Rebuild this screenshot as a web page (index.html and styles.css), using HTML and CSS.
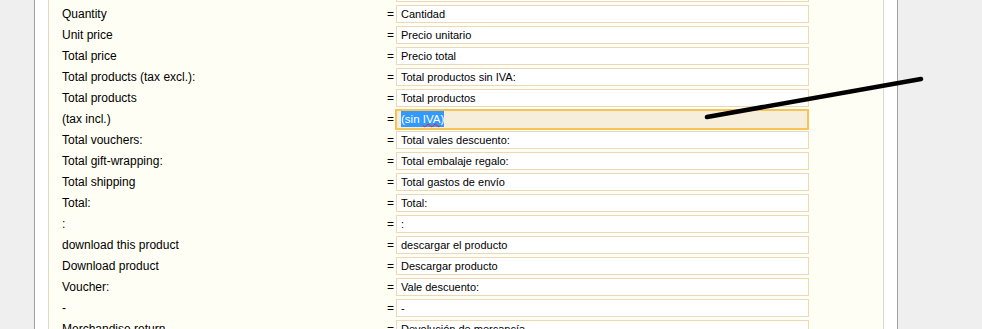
FILE: index.html
```html
<!DOCTYPE html>
<html lang="en">
<head>
  <meta charset="UTF-8" />
  <title>Translations - Fields</title>
  <link rel="stylesheet" href="styles.css">
</head>
<body>
  <div class="page">
    <div class="panel">

      <!-- translation rows -->
      <div class="rows">
        <div class="row"><label></label><span class="eq"></span><input class="field" type="text" value=""></div>
        <div class="row"><label>Quantity</label><span class="eq">=</span><input class="field" type="text" value="Cantidad"></div>
        <div class="row"><label>Unit price</label><span class="eq">=</span><input class="field" type="text" value="Precio unitario"></div>
        <div class="row"><label>Total price</label><span class="eq">=</span><input class="field" type="text" value="Precio total"></div>
        <div class="row"><label>Total products (tax excl.):</label><span class="eq">=</span><input class="field" type="text" value="Total productos sin IVA:"></div>
        <div class="row"><label>Total products</label><span class="eq">=</span><input class="field" type="text" value="Total productos"></div>
        <div class="row"><label>(tax incl.)</label><span class="eq">=</span><div class="field field-focus"><span class="sel">(sin <span class="typo">IVA</span>)</span></div></div>
        <div class="row"><label>Total vouchers:</label><span class="eq">=</span><input class="field" type="text" value="Total vales descuento:"></div>
        <div class="row"><label>Total gift-wrapping:</label><span class="eq">=</span><input class="field" type="text" value="Total embalaje regalo:"></div>
        <div class="row"><label>Total shipping</label><span class="eq">=</span><input class="field" type="text" value="Total gastos de envío"></div>
        <div class="row"><label>Total:</label><span class="eq">=</span><input class="field" type="text" value="Total:"></div>
        <div class="row"><label>:</label><span class="eq">=</span><input class="field" type="text" value=":"></div>
        <div class="row"><label>download this product</label><span class="eq">=</span><input class="field" type="text" value="descargar el producto"></div>
        <div class="row"><label>Download product</label><span class="eq">=</span><input class="field" type="text" value="Descargar producto"></div>
        <div class="row"><label>Voucher:</label><span class="eq">=</span><input class="field" type="text" value="Vale descuento:"></div>
        <div class="row"><label>-</label><span class="eq">=</span><input class="field" type="text" value="-"></div>
        <div class="row"><label>Merchandise return</label><span class="eq">=</span><input class="field" type="text" value="Devolución de mercancía"></div>
      </div>

    </div>
  </div>

  <!-- pen mark drawn over the screenshot -->
  <svg class="mark" width="982" height="329" viewBox="0 0 982 329">
    <line x1="707" y1="117" x2="921" y2="79" stroke="#000" stroke-width="4.5" stroke-linecap="round" />
  </svg>
</body>
</html>
```

FILE: styles.css
```css
body { margin: 0; background: #efefef; font-family: "Liberation Sans", Arial, sans-serif; font-size: 12px; color: #000; overflow: hidden; height: 329px; }
.page { margin-left: 34px; width: 836px; padding: 0 13px; background: #fff; border-left: 1px solid #a0a0a0; border-right: 1px solid #a0a0a0; height: 329px; }
.panel { display: flow-root; overflow: hidden; background: #fffef5; border-left: 1px solid #e0d8c6; border-right: 1px solid #e0d8c6; height: 329px; padding: 0 13px; box-sizing: border-box; }
.rows { margin-top: -17px; }
.row { display: grid; grid-template-columns: 325px 9px 413px; height: 21px; align-items: start; }
.row label { line-height: 20px; white-space: nowrap; }
.eq { line-height: 20px; }
.field { box-sizing: border-box; height: 18px; width: 413px; margin: 1px 0 0; padding: 0 4px; border: 1px solid #ead9b4; background: #fff; font-family: "Liberation Sans", Arial, sans-serif; font-size: 11px; color: #000; outline: none; line-height: 16px; }
.field-focus { height: 21px; margin-top: 0; border: 2px solid #f5c35a; background: #f6eedb; padding: 0 4px; line-height: 17px; position: relative; left: -1px; width: 414px; font-size: 11.5px; }
.sel { background: #3399ff; color: #fff; padding: 2px 0; }
.typo { text-decoration: underline wavy #e02020; text-decoration-thickness: 1px; text-underline-offset: 0; }
.mark { position: absolute; left: 0; top: 0; pointer-events: none; }
```
